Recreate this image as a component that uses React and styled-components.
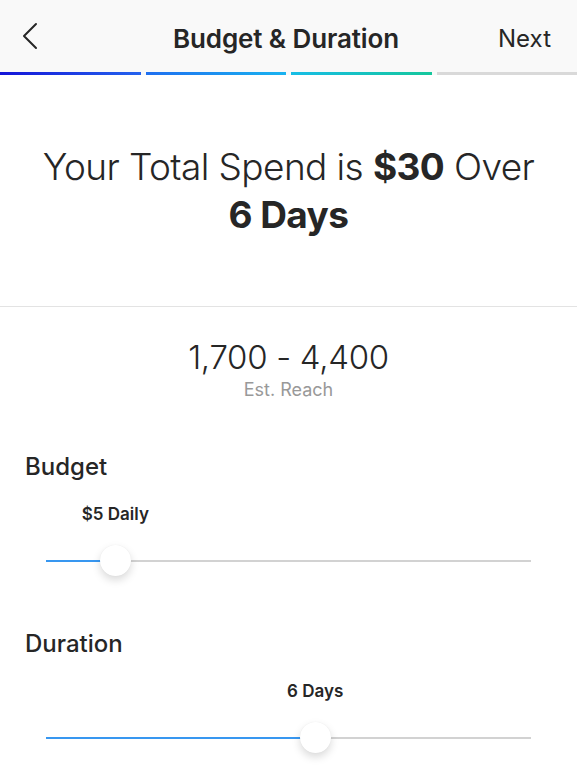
import React from 'react';
import styled, { createGlobalStyle } from 'styled-components';

const GlobalStyle = createGlobalStyle`
  html, body {
    margin: 0;
    padding: 0;
    background: #ffffff;
  }
  body {
    font-family: Inter, "Noto Sans", "Liberation Sans", sans-serif;
    color: #262626;
    -webkit-font-smoothing: antialiased;
  }
`;

const Page = styled.div`
  width: 577px;
  min-height: 776px;
  background: #ffffff;
  overflow: hidden;
`;

const Header = styled.header`
  height: 72px;
  box-sizing: border-box;
  padding: 4px 25px 0 20px;
  background: #f9f9f9;
  display: grid;
  grid-template-columns: 1fr auto 1fr;
  align-items: center;
`;

const BackButton = styled.button`
  justify-self: start;
  width: 24px;
  height: 30px;
  margin-top: -4px;
  padding: 0;
  border: 0;
  background: none;
  display: flex;
  align-items: center;
`;

const Title = styled.h1`
  margin: 0;
  font-size: 26px;
  font-weight: 600;
  letter-spacing: -0.1px;
  color: #262626;
`;

const NextLink = styled.span`
  justify-self: end;
  margin-right: 1px;
  font-size: 24px;
  font-weight: 400;
  color: #262626;
`;

const Progress = styled.div`
  display: flex;
  gap: 5px;
  height: 3px;
  background: #f9f9f9;
`;

const Step = styled.div`
  flex: 1;
  height: 3px;
  background: ${(p) => p.$fill};
`;

const Hero = styled.section`
  padding: 68px 30px 67px;
  text-align: center;
  border-bottom: 1px solid #e3e3e3;
`;

const Headline = styled.h2`
  margin: 0;
  font-size: 37px;
  line-height: 48px;
  font-weight: 300;
  letter-spacing: -0.6px;
  color: #262626;

  strong {
    font-weight: 700;
  }
`;

const Reach = styled.div`
  padding-top: 30px;
  text-align: center;
`;

const ReachValue = styled.div`
  font-size: 33px;
  line-height: 40px;
  font-weight: 300;
  letter-spacing: -0.3px;
  color: #262626;
`;

const ReachLabel = styled.div`
  margin-top: 2px;
  font-size: 18px;
  line-height: 22px;
  color: #999999;
`;

const Control = styled.section`
  padding: 52px 46px 0;
`;

const Label = styled.h3`
  margin: 0 0 0 -21px;
  font-size: 24px;
  line-height: 28px;
  font-weight: 500;
  color: #262626;
`;

const Slider = styled.div`
  position: relative;
  height: 97px;
`;

const ValueTag = styled.span`
  position: absolute;
  top: 23px;
  transform: translateX(-50%);
  font-size: 17px;
  line-height: 21px;
  font-weight: 600;
  white-space: nowrap;
  color: #262626;
`;

const Track = styled.div`
  position: absolute;
  left: 0;
  right: 0;
  top: 79px;
  height: 2px;
  background: #d2d2d2;
`;

const Fill = styled.div`
  height: 100%;
  background: #3897f0;
`;

const Thumb = styled.div`
  position: absolute;
  top: 64px;
  width: 31px;
  height: 31px;
  margin-left: -15.5px;
  border-radius: 50%;
  background: #ffffff;
  box-shadow: 0 4px 9px rgba(0, 0, 0, 0.15), 0 0 1px rgba(0, 0, 0, 0.08);
`;

function RangeSlider({ value, label }) {
  const pct = `${value * 100}%`;
  return (
    <Slider>
      <ValueTag style={{ left: pct }}>{label}</ValueTag>
      <Track>
        <Fill style={{ width: pct }} />
      </Track>
      <Thumb style={{ left: pct }} />
    </Slider>
  );
}

export default function App() {
  return (
    <Page>
      <GlobalStyle />
      <Header>
        <BackButton aria-label="Back">
          <svg width="18" height="28" viewBox="0 0 18 28" fill="none">
            <path d="M16 2 L4 14 L16 26" stroke="#262626" strokeWidth="2" strokeLinecap="round" strokeLinejoin="round" />
          </svg>
        </BackButton>
        <Title>Budget &amp; Duration</Title>
        <NextLink>Next</NextLink>
      </Header>
      <Progress>
        <Step $fill="linear-gradient(90deg, #1414d8, #2463ee)" />
        <Step $fill="linear-gradient(90deg, #1f6ff0, #19b3f0)" />
        <Step $fill="linear-gradient(90deg, #17bde6, #16c79c)" />
        <Step $fill="#d9d9d9" />
      </Progress>
      <Hero>
        <Headline>
          Your Total Spend is <strong>$30</strong> Over <strong>6 Days</strong>
        </Headline>
      </Hero>
      <Reach>
        <ReachValue>1,700 - 4,400</ReachValue>
        <ReachLabel>Est. Reach</ReachLabel>
      </Reach>
      <Control>
        <Label>Budget</Label>
        <RangeSlider value={0.143} label="$5 Daily" />
      </Control>
      <Control>
        <Label>Duration</Label>
        <RangeSlider value={0.555} label="6 Days" />
      </Control>
    </Page>
  );
}
